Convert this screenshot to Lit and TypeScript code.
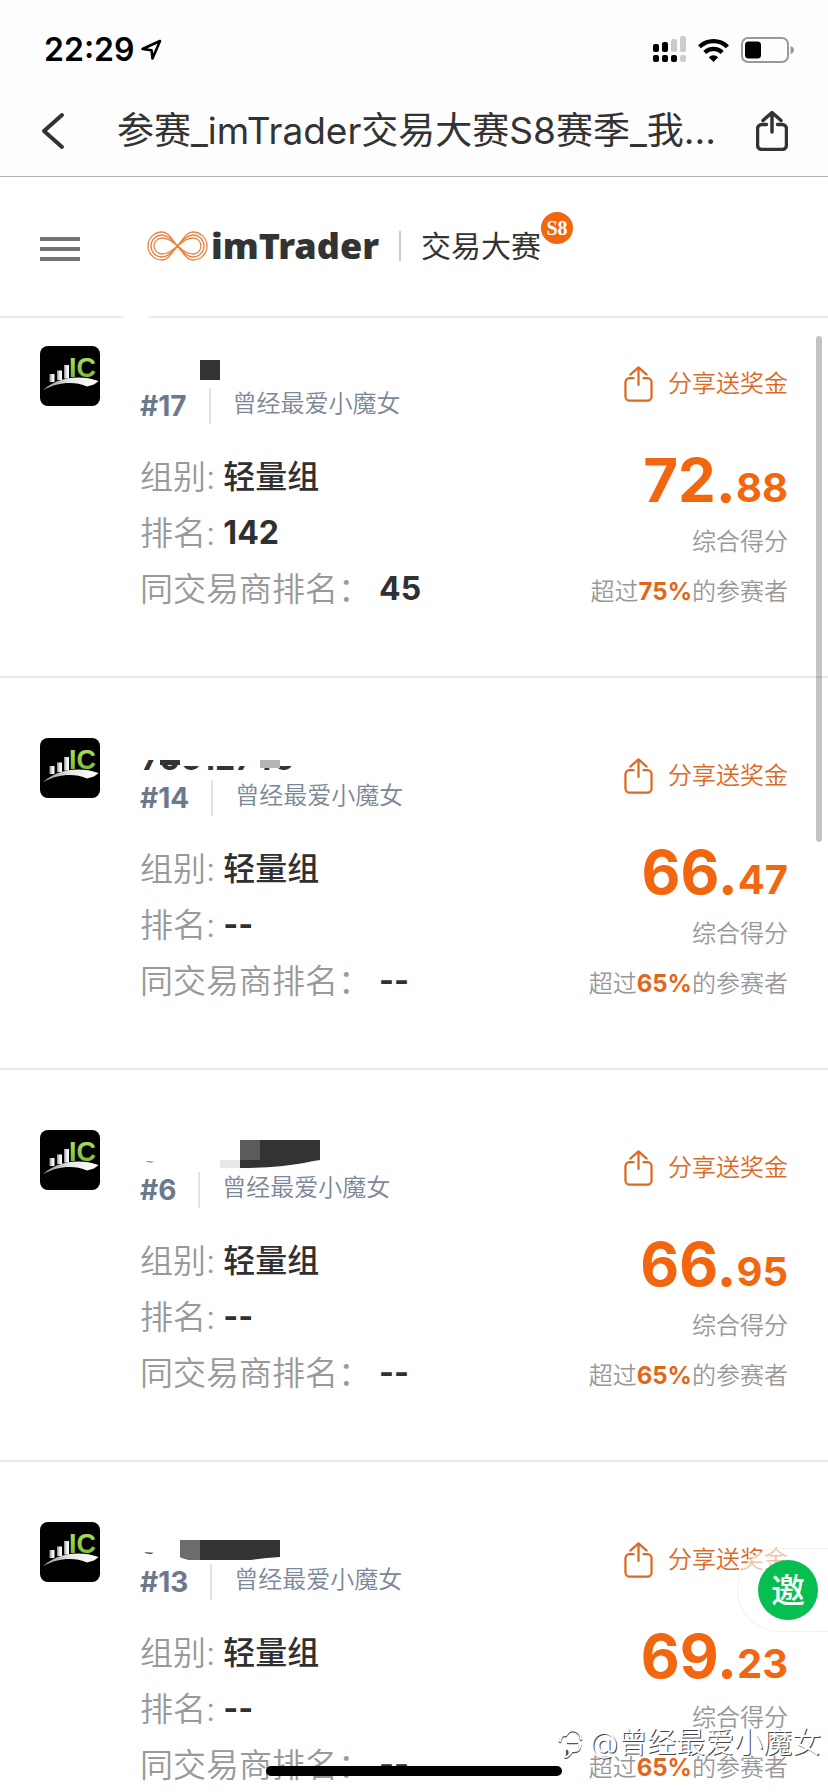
import { LitElement, html, css, svg, nothing } from "lit";
import { customElement, property } from "lit/decorators.js";

interface Entry {
  id: string;
  owner: string;
  group: string;
  rank: string;
  brokerRank: string;
  whole: string;
  decimals: string;
  percent: string;
  mask: "square" | "digits" | "bar" | "strip";
}

const owner = "曾经最爱小魔女";
const group = "轻量组";

const entries: Entry[] = [
  { id: "#17", owner, group, rank: "142", brokerRank: "45", whole: "72.", decimals: "88", percent: "75%", mask: "square" },
  { id: "#14", owner, group, rank: "--", brokerRank: "--", whole: "66.", decimals: "47", percent: "65%", mask: "digits" },
  { id: "#6", owner, group, rank: "--", brokerRank: "--", whole: "66.", decimals: "95", percent: "65%", mask: "bar" },
  { id: "#13", owner, group, rank: "--", brokerRank: "--", whole: "69.", decimals: "23", percent: "65%", mask: "strip" },
];

/* Covers laid over the account number of each entry. */
const masks = {
  square: svg`<rect x="60" y="14" width="20" height="20" fill="#333"/>`,
  digits: svg`
    <svg x="0" y="22" width="200" height="10" viewBox="0 22 200 10">
      <text class="account" x="1" y="32">70512745</text>
    </svg>
    <rect x="40" y="22" width="160" height="6" fill="#fff"/>
    <rect x="20" y="22" width="20" height="5" fill="#333"/>
    <rect x="120" y="22" width="20" height="8" fill="#b5b5b5"/>`,
  bar: svg`
    <path d="M5 31q5 2.500 9 .8q-5-.1-9-.8z" fill="#444"/>
    <rect x="80" y="30" width="20" height="8" fill="#e8e8e8"/>
    <path d="M100 10h80v20q-8 1-16 3q-28 5-64 5z" fill="#333"/>
    <rect x="100" y="10" width="20" height="20" fill="#5c5c5c"/>`,
  strip: svg`
    <path d="M4 30q5 3.500 10 .8q-5-.1-10-.8z" fill="#444"/>
    <path d="M40 18h100v17q-16 1-30 3H50q-6-1-10-3z" fill="#333"/>
    <path d="M40 18h20v20H50q-6-1-10-3z" fill="#6c6c6c"/>`,
};

const shareIcon = html`
  <svg class="share-icon" viewBox="0 0 32 40" fill="none" stroke="currentColor" stroke-linecap="round" stroke-linejoin="round" aria-hidden="true">
    <path d="M10.500 13.500H6a4.500 4.500 0 0 0-4.500 4.500V34A4.500 4.500 0 0 0 6 38.500H26A4.500 4.500 0 0 0 30.500 34V18A4.500 4.500 0 0 0 26 13.500H21.500"/>
    <path d="M16 21V2M7 9.500L16 1.500L25 9.500"/>
  </svg>`;

@customElement("entry-card")
class EntryCard extends LitElement {
  @property({ attribute: false }) entry!: Entry;

  static styles = css`
    :host {
      display: flex;
      gap: 40px;
      padding: 60px 40px 59px 40px;
      border-bottom: 2px solid #e8e8e8;
    }
    .avatar { flex: none; width: 60px; height: 60px; display: block; }
    .logo-text { font: 700 27px "Liberation Sans", Arial, sans-serif; }
    .info { flex: 1; min-width: 0; }
    .mask { display: block; width: 200px; height: 42px; }
    .account { font: 700 32px Inter, sans-serif; fill: #333; }
    .who { display: flex; align-items: center; height: 36px; }
    .number { font-size: 28px; line-height: 36px; font-weight: 700; color: #6c788b; }
    .bar { width: 2px; height: 36px; margin: 0 22px; background: #e2e3e6; }
    .owner { font-size: 24px; line-height: 32px; padding-bottom: 4px; font-weight: 350; color: #7c8798; }
    dl { margin: 25px 0 0; }
    .row { display: flex; gap: 8px; font-size: 33px; line-height: 56px; white-space: nowrap; }
    dt { font-weight: 350; color: #999; }
    dd { margin: 0; font-size: 32px; font-weight: 700; color: #303030; }
    .group { font-weight: 500; }
    .result { display: flex; flex-direction: column; align-items: flex-end; white-space: nowrap; color: #999; font-weight: 350; font-size: 24px; }
    .share {
      display: flex; align-items: center; gap: 15px;
      height: 36px; margin: 20px 0 0; padding: 0; border: 0; background: none;
      font: inherit; line-height: 32px; color: #dc6a25;
    }
    .share-icon { width: 29px; height: 36px; stroke-width: 2.500; }
    .score { margin-top: 48px; line-height: 60px; height: 60px; color: #f2660f; font-weight: 700; font-size: 60px; }
    .decimals { font-size: 40px; }
    .caption { margin-top: 16px; line-height: 32px; }
    .beat { margin-top: 18px; line-height: 32px; }
    .percent { font-weight: 700; color: #e2661a; }
  `;

  render() {
    const e = this.entry;
    if (!e) return nothing;
    return html`
      <svg class="avatar" viewBox="0 0 60 60" role="img" aria-label="IC">
        <defs>
          <linearGradient id="green" x1="0" y1="0" x2="0" y2="1">
            <stop offset="0" stop-color="#b5e65c"/><stop offset="1" stop-color="#6fae35"/>
          </linearGradient>
          <linearGradient id="silver" x1="0" y1="0" x2="1" y2="0">
            <stop offset="0" stop-color="#8c8c8c"/><stop offset=".5" stop-color="#e8e8e8"/><stop offset="1" stop-color="#fff"/>
          </linearGradient>
        </defs>
        <rect width="60" height="60" rx="8"/>
        <g fill="url(#silver)">
          <rect x="9.500" y="28" width="5" height="8"/>
          <rect x="17" y="24.500" width="5" height="9.500"/>
          <rect x="24" y="19" width="5" height="13.500"/>
          <path d="M2.500 44.500C16 32 38 28 58.500 35Q55 39 47 40.500C34 35 18 36 2.500 44.500z"/>
        </g>
        <text class="logo-text" x="29" y="31" fill="url(#green)">IC</text>
      </svg>
      <div class="info">
        <svg class="mask" viewBox="0 0 200 42" aria-hidden="true">${masks[e.mask]}</svg>
        <div class="who">
          <span class="number">${e.id}</span><span class="bar"></span><span class="owner">${e.owner}</span>
        </div>
        <dl>
          <div class="row"><dt>组别:</dt><dd class="group">${e.group}</dd></div>
          <div class="row"><dt>排名:</dt><dd>${e.rank}</dd></div>
          <div class="row"><dt>同交易商排名：</dt><dd>${e.brokerRank}</dd></div>
        </dl>
      </div>
      <div class="result">
        <button class="share" type="button">${shareIcon}<span>分享送奖金</span></button>
        <div class="score">${e.whole}<span class="decimals">${e.decimals}</span></div>
        <div class="caption">综合得分</div>
        <div class="beat">超过<span class="percent">${e.percent}</span>的参赛者</div>
      </div>
    `;
  }
}

@customElement("app-root")
class AppRoot extends LitElement {
  static styles = css`
    :host {
      display: flex; flex-direction: column; position: relative;
      height: 100vh; overflow: hidden; background: #fff;
      font-family: Inter, "Noto Sans CJK SC", sans-serif;
    }
    .top { flex: none; background: #fdfdfd; border-bottom: 1px solid #b0b0b0; }
    .status { display: flex; align-items: center; height: 98px; padding: 2px 34px 0 44px; box-sizing: border-box; }
    .time { font-size: 32px; line-height: 40px; font-weight: 600; color: #000; }
    .location { width: 22px; height: 22px; margin-left: 6px; }
    .signals { display: flex; align-items: center; margin-left: auto; gap: 12px; }
    .cell { width: 33px; height: 26px; padding-bottom: 2px; }
    .wifi { width: 31px; height: 24px; }
    .battery { width: 53px; height: 26px; }
    .nav { display: flex; align-items: center; height: 78px; padding: 0 40px 12px; box-sizing: border-box; color: #333; }
    .back, .action, .menu { display: block; border: 0; padding: 0; background: none; color: inherit; }
    .back svg { display: block; width: 26px; height: 38px; }
    h1 { flex: 1; min-width: 0; margin: 0 0 0 51px; font-size: 37px; line-height: 48px; font-weight: 400; white-space: nowrap; overflow: hidden; }
    .action { flex: none; }
    .share-icon { display: block; width: 32px; height: 40px; stroke-width: 3.500; }
    .header { flex: none; display: flex; align-items: center; height: 139px; padding: 0 40px; box-sizing: border-box; }
    .menu { display: flex; flex-direction: column; gap: 6px; width: 40px; margin-top: 4px; }
    .menu span { height: 4px; background: #757575; }
    .brand { display: flex; align-items: center; margin-left: 67px; padding-bottom: 2px; color: #333; text-decoration: none; }
    .infinity { width: 61px; height: 32px; }
    .wordmark { margin-left: 3px; font: 900 36px/40px "Noto Sans", sans-serif; }
    .split { width: 2px; height: 30px; margin: 0 20px; background: #ccc; }
    .contest { position: relative; font-size: 30px; line-height: 40px; font-weight: 400; }
    .badge {
      position: absolute; left: 100%; bottom: 22px; width: 32px; height: 32px; border-radius: 50%;
      background: #f2660f; color: #fff; text-align: center;
      font: 700 20px/32px "Liberation Serif", serif;
    }
    .rule { flex: none; height: 2px; background: linear-gradient(90deg, #e8e8e8 120px, transparent 125px, transparent 147px, #e8e8e8 152px); }
    .list { flex: 1; min-height: 0; overflow: hidden; }
    entry-card:first-child { padding-top: 28px; }
    .scrollbar { position: absolute; right: 6px; top: 336px; width: 6px; height: 506px; border-radius: 3px; background: rgba(0, 0, 0, .23); }
    .invite {
      position: absolute; right: 0; bottom: 160px; display: flex; align-items: center;
      height: 84px; padding: 0 10px 0 20px; border: 1px solid #f0f0f0; border-right: 0;
      border-radius: 42px 0 0 42px; background: rgba(255, 255, 255, .6); box-sizing: border-box;
    }
    .invite span { width: 60px; height: 60px; border-radius: 50%; background: #07bf50; color: #fff; font-size: 34px; line-height: 58px; font-weight: 500; text-align: center; font-family: "Noto Sans CJK SC", sans-serif; }
    .watermark {
      position: absolute; right: 7px; bottom: 29px; display: flex; align-items: center; gap: 6px;
      color: #fff; font-size: 29px; line-height: 40px; font-weight: 350; text-shadow: 1px 1px 0 #444;
    }
    .watermark svg { width: 26px; height: 32px; }
    .home { position: absolute; left: 50%; bottom: 16px; width: 296px; height: 10px; margin-left: -148px; border-radius: 5px; background: #000; }
  `;

  render() {
    return html`
      <div class="top">
        <div class="status">
          <span class="time">22:29</span>
          <svg class="location" viewBox="0 0 22 22" aria-hidden="true">
            <path d="M20 2L2.500 10L11.500 11.200L12.500 19.500z" fill="none" stroke="#000" stroke-width="2.600" stroke-linejoin="round"/>
          </svg>
          <div class="signals" aria-hidden="true">
            <svg class="cell" viewBox="0 0 33 26">
              <rect x="0" y="8" width="6" height="8" rx="2"/><rect x="9" y="6" width="6" height="10" rx="2"/>
              <rect x="18" y="3" width="6" height="13" rx="2" fill="#ccc"/><rect x="27" y="0" width="6" height="16" rx="2" fill="#ccc"/>
              <rect x="0" y="19" width="6" height="7" rx="2"/><rect x="9" y="19" width="6" height="7" rx="2"/>
              <rect x="18" y="19" width="6" height="7" rx="2"/><rect x="27" y="19" width="6" height="7" rx="2" fill="#ccc"/>
            </svg>
            <svg class="wifi" viewBox="0 0 31 24">
              <g fill="none" stroke="#000" stroke-width="4.200">
                <path d="M1.500 8.800A20 20 0 0 1 29.500 8.800"/><path d="M6.800 14.500A12.400 12.400 0 0 1 24.200 14.500"/>
              </g>
              <path d="M15.500 24L10.800 19.200A6.800 6.800 0 0 1 20.200 19.200z"/>
            </svg>
            <svg class="battery" viewBox="0 0 53 26">
              <rect x="1" y="1" width="46" height="24" rx="6" fill="none" stroke="#999" stroke-width="2"/>
              <rect x="4" y="4.500" width="16" height="17" rx="3.500"/>
              <path d="M49.500 9Q53 10 53 13T49.500 17z" fill="#999"/>
            </svg>
          </div>
        </div>
        <div class="nav">
          <button class="back" type="button" aria-label="返回">
            <svg viewBox="0 0 26 38" fill="none" stroke="currentColor" stroke-width="4" stroke-linecap="round" stroke-linejoin="round"><path d="M22 3L4 19L22 35"/></svg>
          </button>
          <h1>参赛_imTrader交易大赛S8赛季_我...</h1>
          <button class="action" type="button" aria-label="分享">${shareIcon}</button>
        </div>
      </div>
      <div class="header">
        <button class="menu" type="button" aria-label="菜单"><span></span><span></span><span></span></button>
        <a class="brand" href="#">
          <svg class="infinity" viewBox="0 0 61 32" fill="none" stroke="#e98440" stroke-width="1.300" aria-hidden="true">
            <path d="M30.500 16C24 8 21 2 15 2A14 14 0 0 0 15 30C21 30 24 24 30.500 16S40 2 46 2A14 14 0 0 1 46 30C40 30 37 24 30.500 16z"/>
            <path d="M30.500 16C24 9 20 5 15 5A11 11 0 0 0 15 27C20 27 24 23 30.500 16S41 5 46 5A11 11 0 0 1 46 27C41 27 37 23 30.500 16z"/>
            <path d="M30.500 16C23 10 20 8 15 8A8 8 0 0 0 15 24C20 24 23 22 30.500 16S41 8 46 8A8 8 0 0 1 46 24C41 24 38 22 30.500 16z"/>
          </svg>
          <span class="wordmark">imTrader</span>
          <span class="split"></span>
          <span class="contest">交易大赛<span class="badge">S8</span></span>
        </a>
      </div>
      <div class="rule"></div>
      <main class="list">${entries.map((e) => html`<entry-card .entry=${e}></entry-card>`)}</main>
      <div class="scrollbar"></div>
      <button class="invite" type="button"><span>邀</span></button>
      <div class="home"></div>
      <div class="watermark">
        <svg viewBox="0 0 26 32" fill="none" stroke-linecap="round" aria-hidden="true">
          <path d="M2 15Q3 8 8 9Q12 2 18 5Q23 7 23 13M22 18Q23 26 14 25Q11 30 8 31Q10 27 9 24M10 16H19" stroke="#555" stroke-width="2.500"/>
          <path d="M2 14Q3 7 8 8Q12 1 18 4Q23 6 23 12M22 17Q23 25 14 24Q11 29 8 30M10 15H19" stroke="#fff" stroke-width="2"/>
        </svg>
        <span>@曾经最爱小魔女</span>
      </div>
    `;
  }
}
